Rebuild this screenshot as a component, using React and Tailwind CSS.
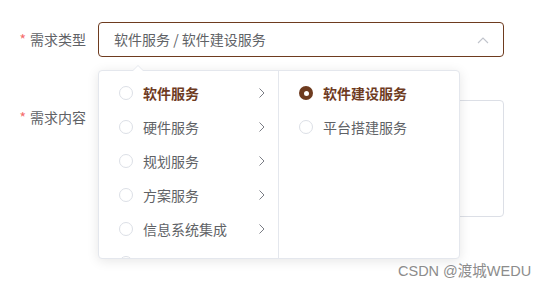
import React from "react";

const font = { fontFamily: '"Noto Sans CJK SC", "Noto Sans", sans-serif' };

function Chevron({ className }) {
  return (
    <svg width="8" height="12" viewBox="0 0 8 12" className={className}>
      <path d="M1.5 1.5 L6 6 L1.5 10.5" fill="none" stroke="currentColor" strokeWidth="1" />
    </svg>
  );
}

function Radio({ checked }) {
  if (checked)
    return (
      <span className="w-[14px] h-[14px] rounded-full bg-[#6e3b1f] flex items-center justify-center shrink-0">
        <span className="w-[5px] h-[5px] rounded-full bg-white" />
      </span>
    );
  return <span className="w-[14px] h-[14px] rounded-full border border-[#dcdfe6] bg-white shrink-0" />;
}

const left = ["软件服务", "硬件服务", "规划服务", "方案服务", "信息系统集成", "其他服务"];
const right = ["软件建设服务", "平台搭建服务"];

export default function App() {
  return (
    <div className="relative w-[546px] h-[286px] bg-white overflow-hidden text-[14px] text-[#606266]" style={font}>
      <div className="pt-[22px] flex flex-col gap-[43px]">
        <div className="flex">
          <label className="w-[98px] pr-[12px] h-[35px] flex items-center justify-end">
            <span className="text-[#f56c6c] mr-[4px]">*</span>需求类型
          </label>
          <div className="w-[406px] h-[35px] border border-[#6e3b1f] rounded-[4px] flex items-center pl-[15px] pr-[14px]">
            <span className="flex-1 text-[#606266]">软件服务 / 软件建设服务</span>
            <svg width="12" height="8" viewBox="0 0 12 8">
              <path d="M1 7 L6 2 L11 7" fill="none" stroke="#c0c4cc" strokeWidth="1.1" />
            </svg>
          </div>
        </div>
        <div className="flex">
          <label className="w-[98px] pr-[12px] h-[35px] flex items-center justify-end">
            <span className="text-[#f56c6c] mr-[4px]">*</span>需求内容
          </label>
          <div className="w-[406px] h-[117px] border border-[#dcdfe6] rounded-[4px]" />
        </div>
      </div>

      <div className="absolute left-[98px] top-[70px] w-[362px] h-[189px] bg-white border border-[#e4e7ed] rounded-[4px] shadow-[0_2px_12px_rgba(0,0,0,0.1)] flex">
        <div className="absolute left-[33px] top-[-6px] w-0 h-0 border-x-[6px] border-x-transparent border-b-[6px] border-b-[#e4e7ed]" />
        <div className="absolute left-[33px] top-[-5px] w-0 h-0 border-x-[6px] border-x-transparent border-b-[6px] border-b-white" />
        <div className="w-[180px] h-full border-r border-[#e4e7ed] overflow-hidden pt-[5px]">
          {left.map((t, i) => (
            <div key={t} className="h-[34px] flex items-center pl-[20px] pr-[12px]">
              <Radio />
              <span className={"ml-[10px] flex-1 " + (i === 0 ? "font-bold text-[#6e3b1f]" : "text-[#606266]")}>
                {i === 5 ? "" : t}
              </span>
              {i !== 5 && <Chevron className="text-[#7a7d85]" />}
            </div>
          ))}
        </div>
        <div className="flex-1 h-full pt-[5px]">
          {right.map((t, i) => (
            <div key={t} className="h-[34px] flex items-center pl-[20px]">
              <Radio checked={i === 0} />
              <span className={"ml-[10px] " + (i === 0 ? "font-bold text-[#6e3b1f]" : "text-[#606266]")}>{t}</span>
            </div>
          ))}
        </div>
      </div>

      <div
        className="absolute left-[398px] top-[261px] text-[14.5px] text-[#8c8c8c]"
        style={{ fontFamily: '"Liberation Sans", "Noto Sans CJK SC", sans-serif' }}
      >
        CSDN @渡城WEDU
      </div>
    </div>
  );
}
